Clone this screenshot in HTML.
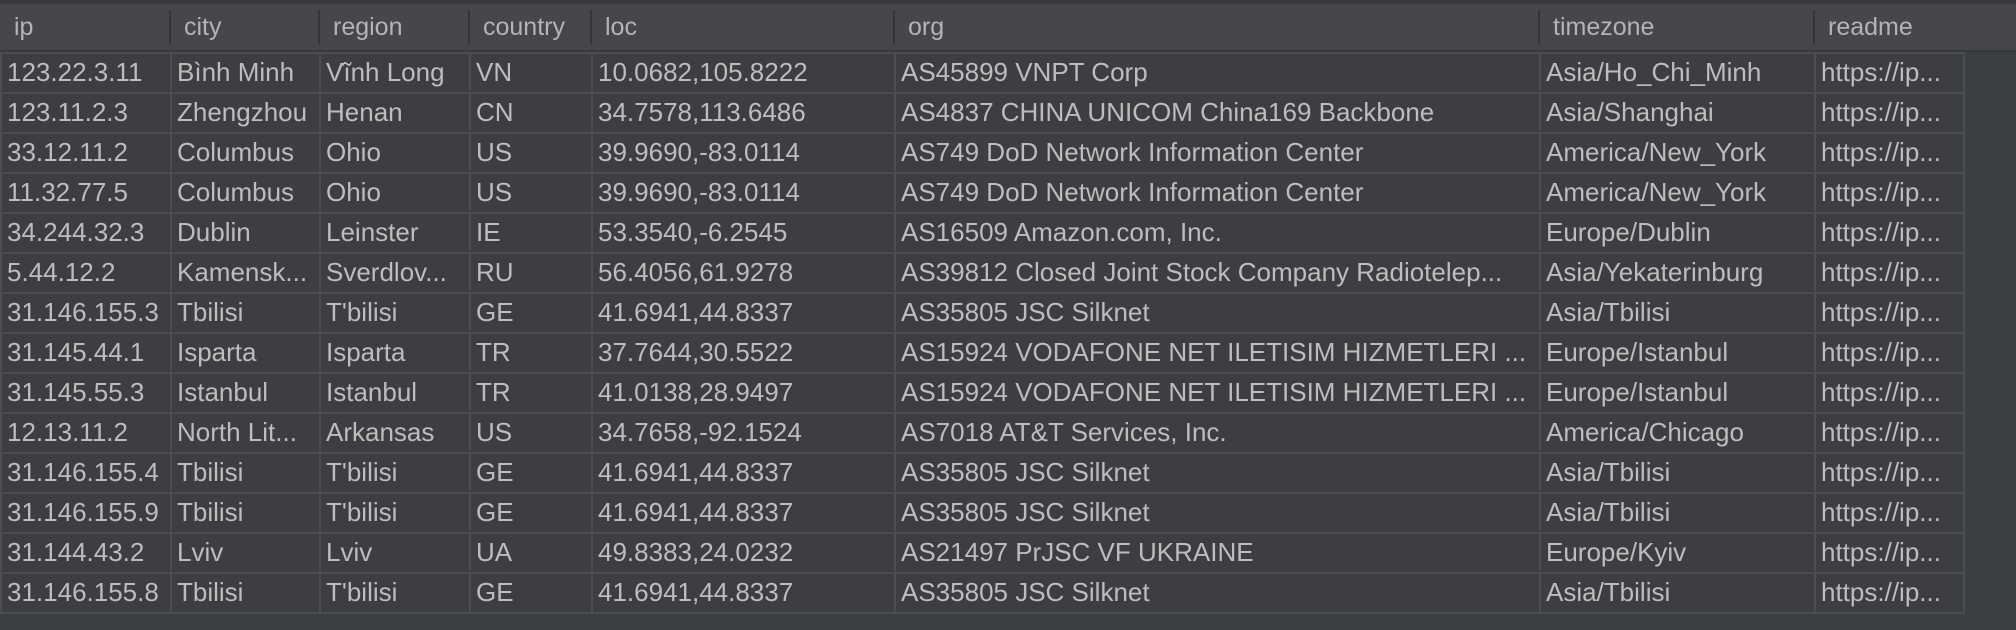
<!DOCTYPE html>
<html><head><meta charset="utf-8"><style>
html,body{margin:0;padding:0;background:#3c3f41;width:2016px;height:630px;overflow:hidden}
body{font-family:"Liberation Sans",sans-serif;color:#bdbdbd}
.hdr{position:absolute;left:0;top:4px;width:2016px;height:46px;background:#45474a;border-bottom:2px solid #37393b}
.top{position:absolute;left:0;top:0;width:2016px;height:4px;background:#37393b}
.h{position:absolute;top:0;height:47px;line-height:47px;font-size:25px;color:#b4b4b4;padding-left:14px;box-sizing:border-box}
.hd{position:absolute;top:6px;width:2px;height:34px;background:#333537}
table{position:absolute;left:0;top:52px;border-collapse:collapse;table-layout:fixed}
td{height:38px;border:2px solid #4b4d50;font-size:26px;padding:0 0 2px 5px;box-sizing:border-box;white-space:nowrap;overflow:hidden;background:#3c3e41;line-height:36px}
tr{height:40px}
</style></head><body>
<div class="top"></div>
<div class="hdr">
<div class="h" style="left:0">ip</div>
<div class="hd" style="left:169px"></div><div class="h" style="left:170px">city</div>
<div class="hd" style="left:318px"></div><div class="h" style="left:319px">region</div>
<div class="hd" style="left:468px"></div><div class="h" style="left:469px">country</div>
<div class="hd" style="left:590px"></div><div class="h" style="left:591px">loc</div>
<div class="hd" style="left:893px"></div><div class="h" style="left:894px">org</div>
<div class="hd" style="left:1538px"></div><div class="h" style="left:1539px">timezone</div>
<div class="hd" style="left:1813px"></div><div class="h" style="left:1814px">readme</div>
</div>
<table>
<colgroup><col style="width:170px"><col style="width:149px"><col style="width:150px"><col style="width:122px"><col style="width:303px"><col style="width:645px"><col style="width:275px"><col style="width:149px"></colgroup>
<tr><td>123.22.3.11</td><td>Bình Minh</td><td>Vĩnh Long</td><td>VN</td><td>10.0682,105.8222</td><td>AS45899 VNPT Corp</td><td>Asia/Ho_Chi_Minh</td><td>https://ip...</td></tr>
<tr><td>123.11.2.3</td><td>Zhengzhou</td><td>Henan</td><td>CN</td><td>34.7578,113.6486</td><td>AS4837 CHINA UNICOM China169 Backbone</td><td>Asia/Shanghai</td><td>https://ip...</td></tr>
<tr><td>33.12.11.2</td><td>Columbus</td><td>Ohio</td><td>US</td><td>39.9690,-83.0114</td><td>AS749 DoD Network Information Center</td><td>America/New_York</td><td>https://ip...</td></tr>
<tr><td>11.32.77.5</td><td>Columbus</td><td>Ohio</td><td>US</td><td>39.9690,-83.0114</td><td>AS749 DoD Network Information Center</td><td>America/New_York</td><td>https://ip...</td></tr>
<tr><td>34.244.32.3</td><td>Dublin</td><td>Leinster</td><td>IE</td><td>53.3540,-6.2545</td><td>AS16509 Amazon.com, Inc.</td><td>Europe/Dublin</td><td>https://ip...</td></tr>
<tr><td>5.44.12.2</td><td>Kamensk...</td><td>Sverdlov...</td><td>RU</td><td>56.4056,61.9278</td><td>AS39812 Closed Joint Stock Company Radiotelep...</td><td>Asia/Yekaterinburg</td><td>https://ip...</td></tr>
<tr><td>31.146.155.3</td><td>Tbilisi</td><td>T'bilisi</td><td>GE</td><td>41.6941,44.8337</td><td>AS35805 JSC Silknet</td><td>Asia/Tbilisi</td><td>https://ip...</td></tr>
<tr><td>31.145.44.1</td><td>Isparta</td><td>Isparta</td><td>TR</td><td>37.7644,30.5522</td><td>AS15924 VODAFONE NET ILETISIM HIZMETLERI ...</td><td>Europe/Istanbul</td><td>https://ip...</td></tr>
<tr><td>31.145.55.3</td><td>Istanbul</td><td>Istanbul</td><td>TR</td><td>41.0138,28.9497</td><td>AS15924 VODAFONE NET ILETISIM HIZMETLERI ...</td><td>Europe/Istanbul</td><td>https://ip...</td></tr>
<tr><td>12.13.11.2</td><td>North Lit...</td><td>Arkansas</td><td>US</td><td>34.7658,-92.1524</td><td>AS7018 AT&amp;T Services, Inc.</td><td>America/Chicago</td><td>https://ip...</td></tr>
<tr><td>31.146.155.4</td><td>Tbilisi</td><td>T'bilisi</td><td>GE</td><td>41.6941,44.8337</td><td>AS35805 JSC Silknet</td><td>Asia/Tbilisi</td><td>https://ip...</td></tr>
<tr><td>31.146.155.9</td><td>Tbilisi</td><td>T'bilisi</td><td>GE</td><td>41.6941,44.8337</td><td>AS35805 JSC Silknet</td><td>Asia/Tbilisi</td><td>https://ip...</td></tr>
<tr><td>31.144.43.2</td><td>Lviv</td><td>Lviv</td><td>UA</td><td>49.8383,24.0232</td><td>AS21497 PrJSC VF UKRAINE</td><td>Europe/Kyiv</td><td>https://ip...</td></tr>
<tr><td>31.146.155.8</td><td>Tbilisi</td><td>T'bilisi</td><td>GE</td><td>41.6941,44.8337</td><td>AS35805 JSC Silknet</td><td>Asia/Tbilisi</td><td>https://ip...</td></tr>
</table>
</body></html>
